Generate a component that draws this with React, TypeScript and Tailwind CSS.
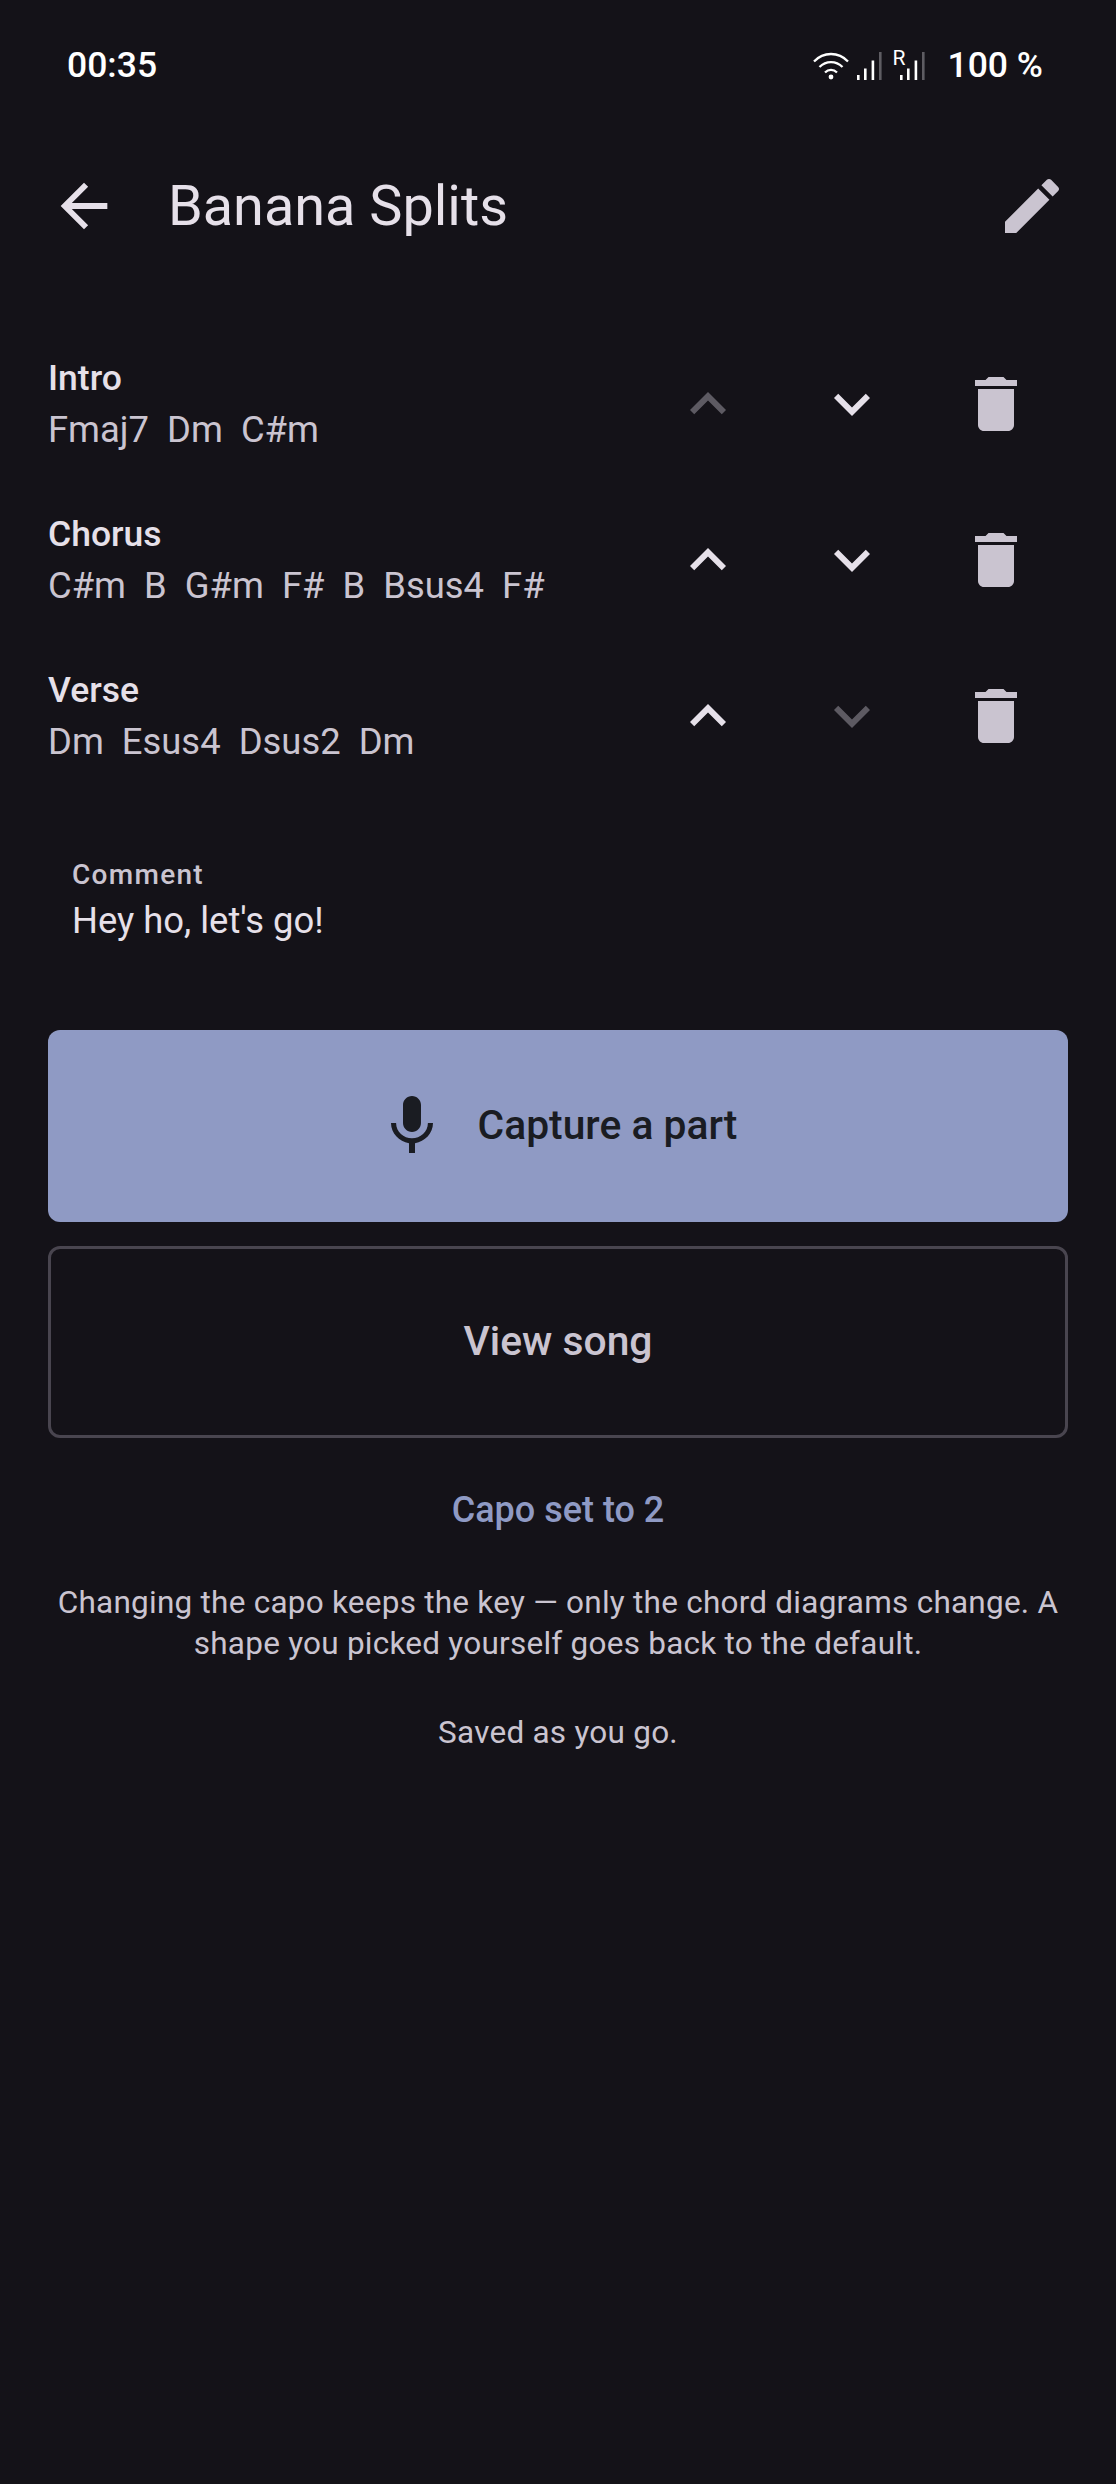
import React from 'react';

const parts = [
  { name: 'Intro', chords: 'Fmaj7\u00a0\u00a0Dm\u00a0\u00a0C#m', upOff: true, downOff: false },
  { name: 'Chorus', chords: 'C#m\u00a0\u00a0B\u00a0\u00a0G#m\u00a0\u00a0F#\u00a0\u00a0B\u00a0\u00a0Bsus4\u00a0\u00a0F#', upOff: false, downOff: false },
  { name: 'Verse', chords: 'Dm\u00a0\u00a0Esus4\u00a0\u00a0Dsus2\u00a0\u00a0Dm', upOff: false, downOff: true },
];

const Icon: React.FC<{ d: string; className: string }> = ({ d, className }) => (
  <svg viewBox="0 0 24 24" fill="currentColor" className={className}>
    <path d={d} />
  </svg>
);

const Bars: React.FC = () => (
  <svg viewBox="0 0 25 29" className="w-[25px] h-[29px]" fill="#ffffff">
    <rect x="0" y="23" width="2.6" height="5" />
    <rect x="7" y="16.5" width="2.6" height="11.5" />
    <rect x="14.6" y="8.5" width="2.6" height="19.5" />
    <rect x="22" y="0" width="2.6" height="28" fill="#5e5c62" />
  </svg>
);

const StatusBar: React.FC = () => (
  <div className="h-[130px] pt-[2px] flex items-center justify-between pl-[67px] pr-[73px] text-white font-medium text-[35.5px]">
    <span>00:35</span>
    <div className="flex items-center">
      <svg viewBox="0 0 36 28" className="w-[36px] h-[28px]" fill="none" stroke="#ffffff" strokeWidth="2.3">
        <path d="M1 9.5C10.5 -0.5 25.5 -0.5 35 9.5" />
        <path d="M6.5 15C13 8.5 23 8.5 29.5 15" />
        <path d="M12 20.5C15.5 17 20.5 17 24 20.5" />
        <circle cx="18" cy="25" r="2.4" fill="#ffffff" stroke="none" />
      </svg>
      <div className="ml-[8px] mt-[1px]"><Bars /></div>
      <div className="relative ml-[18px] mt-[1px]">
        <span className="absolute left-[-7px] top-[-4px] text-[21px] leading-[20px] font-normal">R</span>
        <Bars />
      </div>
      <span className="ml-[23px]">100 %</span>
    </div>
  </div>
);

export default function App() {
  return (
    <div className="w-full min-h-screen bg-[#141218] font-['Roboto',sans-serif]">
      <StatusBar />

      <header className="h-[152px] flex items-center justify-between pl-[49px] pr-12">
        <div className="flex items-center gap-[49px]">
          <Icon className="w-[70px] h-[70px] text-[#e6e0e9]" d="M20 11H7.83l5.59-5.59L12 4l-8 8 8 8 1.41-1.41L7.83 13H20v-2z" />
          <h1 className="text-[55.8px] leading-[72px] text-[#e6e0e9]">Banana Splits</h1>
        </div>
        <Icon className="w-[72px] h-[72px] text-[#cac4d0]" d="M3 17.25V21h3.75L17.81 9.94l-3.75-3.75L3 17.25zM20.71 7.04c.39-.39.39-1.02 0-1.41l-2.34-2.34c-.39-.39-1.02-.39-1.41 0l-1.83 1.83 3.75 3.75 1.83-1.83z" />
      </header>

      <div className="mt-[50px] px-12 flex flex-col gap-3">
        {parts.map((part) => (
          <div key={part.name} className="h-[144px] flex items-center">
            <div className="flex-1 min-w-0">
              <div className="text-[35.5px] leading-[50px] font-medium text-[#e6e0e9]">{part.name}</div>
              <div className="text-[36.4px] leading-[53px] text-[#cac4d0]">{part.chords}</div>
            </div>
            <div className="w-[144px] flex justify-center">
              <Icon className={`w-[72px] h-[72px] ${part.upOff ? 'text-[#5d5a62]' : 'text-[#e6e0e9]'}`} d="M7.41 15.41L12 10.83l4.59 4.58L18 14l-6-6-6 6z" />
            </div>
            <div className="w-[144px] flex justify-center">
              <Icon className={`w-[72px] h-[72px] ${part.downOff ? 'text-[#5d5a62]' : 'text-[#e6e0e9]'}`} d="M7.41 8.59L12 13.17l4.59-4.58L18 10l-6 6-6-6z" />
            </div>
            <div className="w-[144px] flex justify-center">
              <Icon className="w-[72px] h-[72px] text-[#cac4d0]" d="M6 19c0 1.1.9 2 2 2h8c1.1 0 2-.9 2-2V7H6v12zM19 4h-3.5l-1-1h-5l-1 1H5v2h14V4z" />
            </div>
          </div>
        ))}
      </div>

      <div className="mt-[66px] px-[72px]">
        <div className="text-[28px] leading-[42px] font-medium tracking-[1.3px] text-[#cac4d0]">Comment</div>
        <div className="text-[36.4px] leading-[50px] text-[#e6e0e9]">Hey ho, let's go!</div>
      </div>

      <div className="mt-[84px] px-12 flex flex-col gap-6">
        <button className="h-[192px] pr-[3px] rounded-[12px] bg-[#8f9ac4] flex items-center justify-center gap-[30px] text-[#1a1c22] text-[40.8px] font-medium">
          <Icon className="w-[72px] h-[72px]" d="M12 14c1.66 0 2.99-1.34 2.99-3L15 5c0-1.66-1.34-3-3-3S9 3.34 9 5v6c0 1.66 1.34 3 3 3zm5.3-3c0 3-2.54 5.1-5.3 5.1S6.7 14 6.7 11H5c0 3.41 2.72 6.23 6 6.72V21h2v-3.28c3.28-.48 6-3.3 6-6.72h-1.7z" />
          Capture a part
        </button>
        <button className="h-[192px] rounded-[12px] border-[3px] border-[#49454f] text-[#cac4d0] text-[40.8px] font-medium">
          View song
        </button>
      </div>

      <div className="mt-[46px] text-center text-[36px] leading-[52px] font-medium text-[#8f9ac4]">Capo set to 2</div>

      <div className="mt-[46px] px-12 text-center text-[31.5px] leading-[41px] tracking-[0.24px] text-[#cac4d0]">
        <p>Changing the capo keeps the key — only the chord diagrams change. A shape you picked yourself goes back to the default.</p>
        <p className="mt-[48px]">Saved as you go.</p>
      </div>
    </div>
  );
}
